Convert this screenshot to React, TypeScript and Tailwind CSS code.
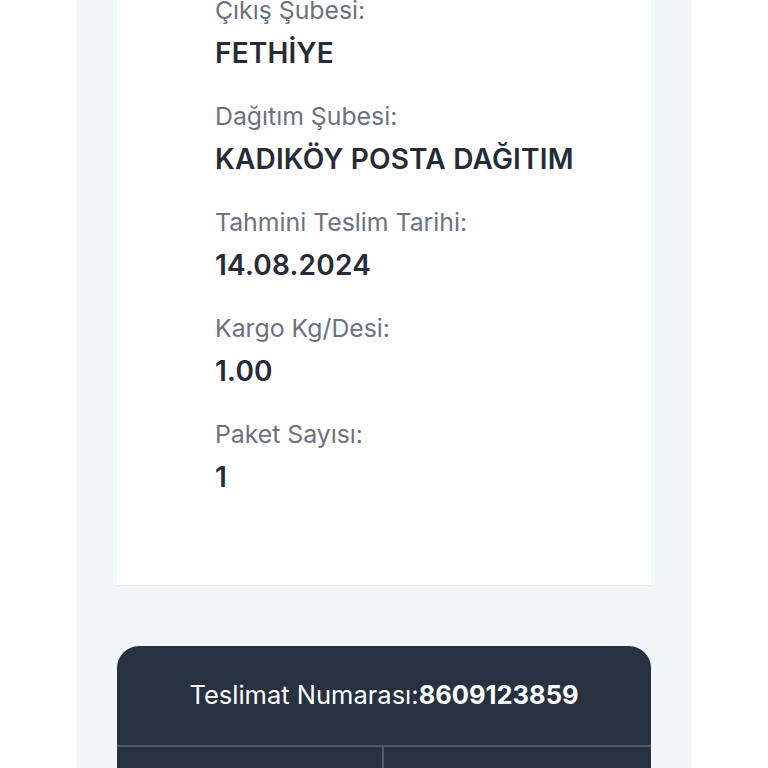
const details = [
  { label: "Çıkış Şubesi:", value: "FETHİYE" },
  { label: "Dağıtım Şubesi:", value: "KADIKÖY POSTA DAĞITIM" },
  { label: "Tahmini Teslim Tarihi:", value: "14.08.2024" },
  { label: "Kargo Kg/Desi:", value: "1.00" },
  { label: "Paket Sayısı:", value: "1" },
];

export default function App() {
  return (
    <div className="h-[768px] overflow-hidden bg-white font-['Inter',sans-serif]">
      <div className="mx-[77px] flex h-full flex-col bg-[#f3f6f9] px-[40px]">
        {/* Shipment details */}
        <div className="-mt-[7px] bg-white pl-[98px] pb-[90px] shadow-[0_1px_1px_rgba(0,0,0,0.04)]">
          <div className="flex flex-col gap-[28px]">
            {details.map((d) => (
              <div key={d.label} className="flex flex-col">
                <span className="text-[24.8px] leading-[34px] text-[#6b7280]">{d.label}</span>
                <span className="mt-[8px] text-[28px] leading-[36px] font-semibold tracking-[0.2px] text-[#252b37]">
                  {d.value}
                </span>
              </div>
            ))}
          </div>
        </div>

        {/* Delivery number */}
        <div className="mt-[61px] rounded-t-[22px] bg-[#283142]">
          <div className="flex h-[99px] items-center justify-center text-[25.5px] text-white">
            <span>Teslimat Numarası:</span>
            <span className="font-bold">8609123859</span>
          </div>
          <div className="grid h-[40px] grid-cols-2 border-t-2 border-[#535b6b]">
            <div className="border-r-2 border-[#535b6b]" />
            <div />
          </div>
        </div>
      </div>
    </div>
  );
}
